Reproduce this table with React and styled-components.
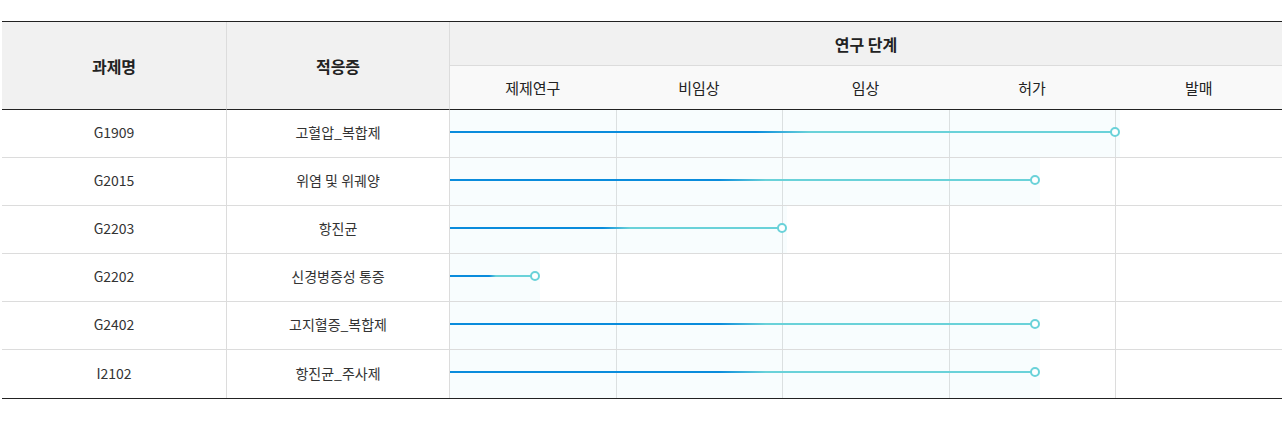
import React from 'react';
import styled, { createGlobalStyle } from 'styled-components';

const GlobalStyle = createGlobalStyle`
  html, body {
    margin: 0;
    padding: 0;
    background: #fff;
  }
  body {
    font-family: "Noto Sans CJK KR", "Noto Sans", sans-serif;
    color: #333;
  }
  * { box-sizing: border-box; }
`;

const stages = ['제제연구', '비임상', '임상', '허가', '발매'];

// progress in percent of the whole stage area
const projects = [
  { code: 'G1909', name: '고혈압_복합제', progress: 80 },
  { code: 'G2015', name: '위염 및 위궤양', progress: 70.3 },
  { code: 'G2203', name: '항진균', progress: 40 },
  { code: 'G2202', name: '신경병증성 통증', progress: 10.3 },
  { code: 'G2402', name: '고지혈증_복합제', progress: 70.3 },
  { code: 'I2102', name: '항진균_주사제', progress: 70.3 },
];

const Page = styled.div`
  padding: 21px 2px 0;
`;

const Table = styled.div`
  display: grid;
  grid-template-columns: 224px 223px repeat(5, 1fr);
  border-top: 1px solid #222;
  border-bottom: 1px solid #222;
`;

const HeadCell = styled.div`
  display: flex;
  align-items: center;
  justify-content: center;
  background: #f1f1f1;
  font-size: 16px;
  font-weight: 700;
  color: #222;
  height: 44px;
  border-left: ${(p) => (p.$first ? 'none' : '1px solid #dcdcdc')};
  border-bottom: 1px solid #dcdcdc;
  grid-row: ${(p) => p.$row || 'auto'};
  grid-column: ${(p) => p.$col || 'auto'};

  ${(p) => p.$tall && `
    height: 88px;
    border-bottom: 1px solid #222;
  `}
`;

const SubHead = styled.div`
  display: flex;
  align-items: center;
  justify-content: center;
  grid-row: 2;
  height: 44px;
  padding-bottom: 1px;
  background: #f9f9f9;
  font-size: 15px;
  color: #222;
  border-left: ${(p) => (p.$first ? '1px solid #dcdcdc' : 'none')};
  border-bottom: 1px solid #222;
`;

const Cell = styled.div`
  display: flex;
  align-items: center;
  justify-content: center;
  height: 48px;
  padding-bottom: 3px;
  font-size: 14px;
  color: #333;
  border-left: ${(p) => (p.$first ? 'none' : '1px solid #dcdcdc')};
  border-bottom: ${(p) => (p.$lastRow ? 'none' : '1px solid #dcdcdc')};
`;

const StageArea = styled.div`
  position: relative;
  grid-column: 3 / span 5;
  display: grid;
  grid-template-columns: repeat(5, 1fr);
  height: 48px;
  border-bottom: ${(p) => (p.$lastRow ? 'none' : '1px solid #dcdcdc')};
`;

const StageSlot = styled.div`
  border-left: 1px solid #dcdcdc;
`;

const Track = styled.div`
  position: absolute;
  left: 1px;
  top: 0;
  bottom: 0;
  background: rgba(215, 242, 250, 0.18);
  pointer-events: none;
`;

const Line = styled.div`
  position: absolute;
  left: 0;
  top: 21px;
  height: 2px;
  right: 5px;
  background: linear-gradient(90deg, #0a8cdc 0%, #0a8cdc 46%, #6ad2d9 54%, #6ad2d9 100%);
`;

const Dot = styled.div`
  position: absolute;
  right: 0;
  top: 17px;
  width: 10px;
  height: 10px;
  border-radius: 50%;
  border: 2px solid #6ad2d9;
  background: #fff;
`;

export default function App() {
  return (
    <>
      <GlobalStyle />
      <Page>
        <Table>
          <HeadCell $first $tall $row="1 / span 2" $col="1">과제명</HeadCell>
          <HeadCell $tall $row="1 / span 2" $col="2">적응증</HeadCell>
          <HeadCell $row="1" $col="3 / span 5">연구 단계</HeadCell>
          {stages.map((s, i) => (
            <SubHead key={s} $first={i === 0}>
              {s}
            </SubHead>
          ))}

          {projects.map((p, i) => {
            const last = i === projects.length - 1;
            return (
              <React.Fragment key={p.code}>
                <Cell $first $lastRow={last}>{p.code}</Cell>
                <Cell $lastRow={last}>{p.name}</Cell>
                <StageArea $lastRow={last}>
                  {stages.map((s) => (
                    <StageSlot key={s} />
                  ))}
                  <Track style={{ width: `calc(${p.progress}% + 4px)` }}>
                    <Line />
                    <Dot />
                  </Track>
                </StageArea>
              </React.Fragment>
            );
          })}
        </Table>
      </Page>
    </>
  );
}
